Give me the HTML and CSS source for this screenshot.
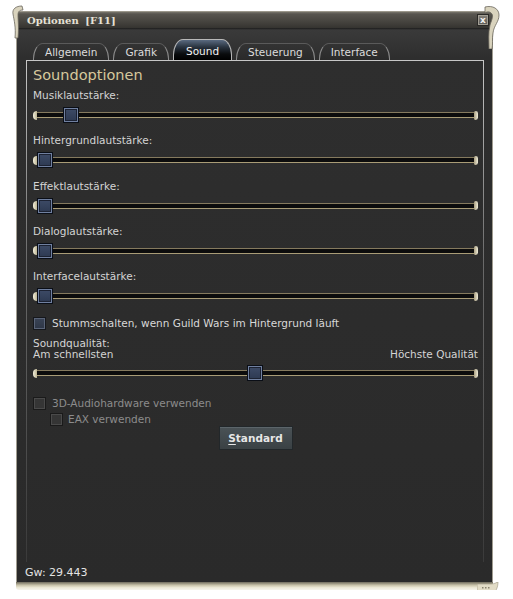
FILE: index.html
```html
<!DOCTYPE html>
<html lang="de">
<head>
<meta charset="utf-8">
<title>Optionen</title>
<link rel="stylesheet" href="styles.css">
</head>
<body>
<div class="window">
  <svg class="curl curl-tl" width="14" height="34" viewBox="0 0 14 34"><path d="M11 1 C5 1 1 4 2 9 C3 15 5 22 4 33 L7 33 C8 22 7 15 7 10 C7 6 9 5 12 5 Z" fill="#d9d3bd" stroke="#6a665c" stroke-width="0.8"/></svg>
  <svg class="curl curl-tr" width="18" height="44" viewBox="0 0 18 44"><path d="M2 2 C10 0 16 4 16 10 C16 17 11 20 10 28 C9 34 10 39 9 44 L6 44 C6 36 5 28 7 20 C9 14 11 10 8 8 C6 6 3 7 2 8 Z" fill="#d9d3bd" stroke="#6a665c" stroke-width="0.8"/></svg>
  <div class="titlebar">
    <span class="title">Optionen [F11]</span>
    <span class="close">x</span>
  </div>
  <div class="body">
    <div class="tabs">
      <span class="tab">Allgemein</span>
      <span class="tab">Grafik</span>
      <span class="tab active">Sound</span>
      <span class="tab">Steuerung</span>
      <span class="tab">Interface</span>
    </div>
    <div class="panel">
      <h1 class="heading">Soundoptionen</h1>
      <div class="fields">
        <div class="field">
          <div class="label">Musiklautstärke:</div>
          <div class="slider"><span class="cap-l"></span><span class="track"></span><span class="cap-r"></span><span class="thumb" style="left:30px"></span></div>
        </div>
        <div class="field">
          <div class="label">Hintergrundlautstärke:</div>
          <div class="slider"><span class="cap-l"></span><span class="track"></span><span class="cap-r"></span><span class="thumb" style="left:4px"></span></div>
        </div>
        <div class="field">
          <div class="label">Effektlautstärke:</div>
          <div class="slider"><span class="cap-l"></span><span class="track"></span><span class="cap-r"></span><span class="thumb" style="left:4px"></span></div>
        </div>
        <div class="field">
          <div class="label">Dialoglautstärke:</div>
          <div class="slider"><span class="cap-l"></span><span class="track"></span><span class="cap-r"></span><span class="thumb" style="left:4px"></span></div>
        </div>
        <div class="field">
          <div class="label">Interfacelautstärke:</div>
          <div class="slider"><span class="cap-l"></span><span class="track"></span><span class="cap-r"></span><span class="thumb" style="left:4px"></span></div>
        </div>
      </div>
      <div class="check mute"><span class="box"></span><span>Stummschalten, wenn Guild Wars im Hintergrund läuft</span></div>
      <div class="quality">
        <div class="qlabel">Soundqualität:</div>
        <div class="qrange"><span>Am schnellsten</span><span>Höchste Qualität</span></div>
      </div>
      <div class="slider qslider"><span class="cap-l"></span><span class="track"></span><span class="cap-r"></span><span class="thumb" style="left:214px"></span></div>
      <div class="check disabled hw"><span class="box"></span><span>3D-Audiohardware verwenden</span></div>
      <div class="check disabled eax"><span class="box"></span><span>EAX verwenden</span></div>
      <button class="btn"><u>S</u>tandard</button>
    </div>
    <div class="footer">Gw: 29.443</div>
  </div>
  <div class="bottom-edge"></div>
  <svg class="curl curl-br" width="22" height="14" viewBox="0 0 22 14"><path d="M0 2 L14 2 C18 2 20 0 21 0 C21 5 19 11 14 12 L0 12 Z" fill="#e2dcc6" stroke="#9a9480" stroke-width="0.6"/><g fill="#8a8470"><rect x="5" y="5" width="1.5" height="1.5"/><rect x="8" y="5" width="1.5" height="1.5"/><rect x="11" y="5" width="1.5" height="1.5"/><rect x="5" y="8" width="1.5" height="1.5"/><rect x="8" y="8" width="1.5" height="1.5"/><rect x="11" y="8" width="1.5" height="1.5"/></g></svg>
</div>
</body>
</html>
```

FILE: styles.css
```css
* { box-sizing: border-box; }
html, body { margin: 0; padding: 0; background: #ffffff; }
body { font-family: "DejaVu Sans", Verdana, sans-serif; }

.window {
  position: relative;
  margin: 11px 0 0 16px;
  width: 477px;
}

.curl { position: absolute; z-index: 2; }
.curl-tl { left: -5px; top: -6px; }
.curl-tr { right: -8px; top: -6px; }
.curl-br { right: -6px; bottom: -6px; }

.titlebar {
  height: 17px;
  display: flex;
  align-items: center;
  justify-content: space-between;
  padding: 0 4px 0 11px;
  background: linear-gradient(#77746c 0, #58554f 2px, #46443f 60%, #353430 100%);
  border-top: 1px solid #9c988c;
}
.title {
  font-family: "DejaVu Serif", "Liberation Serif", serif;
  font-weight: bold;
  font-size: 10px;
  color: #e6e2d6;
  word-spacing: 3px;
}
.close {
  width: 12px;
  height: 12px;
  display: flex;
  align-items: center;
  justify-content: center;
  background: linear-gradient(#85817a, #5c5953);
  border: 1px solid #2a2926;
  box-shadow: inset 0 0 0 1px #a29e94;
  color: #f0f0f0;
  font-size: 9px;
  font-weight: bold;
  line-height: 1;
}

.body {
  height: 554px;
  display: flex;
  flex-direction: column;
  background: linear-gradient(#1c1c1c 0, #3a3a3a 2px, #2e2e2e 30px, #2a2a2a 100%);
  border-left: 1px solid #a09c90;
  border-right: 1px solid #a09c90;
}

.tabs {
  display: flex;
  align-items: flex-end;
  gap: 4px;
  height: 32px;
  padding-left: 16px;
}
.tab {
  height: 17px;
  padding: 0 11px;
  display: flex;
  align-items: center;
  font-size: 10.5px;
  color: #dcdcdc;
  border: 1px solid #8c8c8c;
  border-top-color: #5a5a5a;
  border-bottom: none;
  border-radius: 10px 10px 0 0 / 16px 16px 0 0;
  background: linear-gradient(#333, #2a2a2a);
}
.tab.active {
  height: 21px;
  padding: 1px 12px 0;
  color: #f2f2f2;
  border-color: #b8b8b8;
  background: linear-gradient(#5a6a80 0, #2a3440 35%, #0a0c0e 70%, #000 100%);
}

.panel {
  flex: 1;
  margin: 0 8px 0 9px;
  padding: 5px 5px 0 6px;
  display: flex;
  flex-direction: column;
  border-top: 1px solid #b8b8b8;
  border-left: 1px solid #8a8a8a;
  border-right: 1px solid #8a8a8a;
  border-radius: 3px 3px 0 0;
  border-image: linear-gradient(#c8c8c8, #6a6a6a 40%, #3a3a3a 100%) 1;
}
.heading {
  margin: 0 0 4px 0;
  height: 18px;
  line-height: 18px;
  font-size: 14.5px;
  font-weight: normal;
  color: #d6c89c;
}

.fields { display: flex; flex-direction: column; gap: 10.3px; }
.field { display: flex; flex-direction: column; }
.label {
  height: 14px;
  line-height: 14px;
  font-size: 10.5px;
  color: #d4d4d4;
}
.field .slider { margin-top: 5px; }

.slider {
  position: relative;
  height: 16px;
  display: flex;
  align-items: center;
}
.track {
  flex: 1;
  height: 6px;
  background: #0c0c0c;
  border-top: 1px solid #857a5e;
  border-bottom: 1px solid #a99c76;
}
.cap-l {
  width: 4px;
  height: 9px;
  border-radius: 4px 0 0 4px;
  background: linear-gradient(90deg, #f4f0dc, #bcb493);
}
.cap-r {
  width: 4px;
  height: 9px;
  border-radius: 2px 3px 3px 2px;
  background: linear-gradient(90deg, #a89e80, #f0ecd8);
}
.thumb {
  position: absolute;
  top: 0;
  width: 16px;
  height: 16px;
  border: 1px solid #0a0e16;
  background: linear-gradient(#3e4c68, #2c3850);
  box-shadow: inset 0 0 0 1px #7080a0, inset 0 0 0 2px #1c2232;
}

.check {
  display: flex;
  align-items: center;
  gap: 6px;
  height: 14px;
  font-size: 10.5px;
  color: #d8d8d8;
}
.box {
  width: 13px;
  height: 13px;
  flex: none;
  border: 1px solid #15171c;
  background: linear-gradient(#3a4456, #2e3646);
  box-shadow: inset 0 0 0 1px #5a6478;
}
.mute { margin-top: 12px; }
.check.disabled { color: #8c8c8c; }
.check.disabled .box {
  background: #353535;
  border-color: #1a1a1a;
  box-shadow: inset 0 0 0 1px #4a4a4a;
}
.hw { margin-top: 15px; }
.eax { margin-top: 2px; padding-left: 17px; gap: 5px; }

.quality {
  margin-top: 8px;
  font-size: 10.5px;
  line-height: 11px;
  color: #d4d4d4;
}
.qrange { display: flex; justify-content: space-between; }
.qslider { margin-top: 5px; }

.btn {
  align-self: center;
  margin-top: 0;
  width: 74px;
  height: 24px;
  padding: 0;
  font-family: "DejaVu Sans", Verdana, sans-serif;
  font-size: 10.5px;
  font-weight: bold;
  color: #e6e6e6;
  background: linear-gradient(#4a5256, #3a4144);
  border: 1px solid #22272a;
  box-shadow: inset 0 1px 0 #5c656a;
}
.btn u { text-decoration-thickness: 1px; text-underline-offset: 2px; }

.footer {
  height: 20px;
  padding: 4px 0 0 8px;
  line-height: 14px;
  font-size: 11px;
  color: #e4e4e4;
}

.bottom-edge {
  height: 8px;
  background: linear-gradient(#6e6a5c, #c9c3aa 40%, #ece8d6 70%, #f6f4ec);
  border-radius: 0 0 3px 3px;
}
```
